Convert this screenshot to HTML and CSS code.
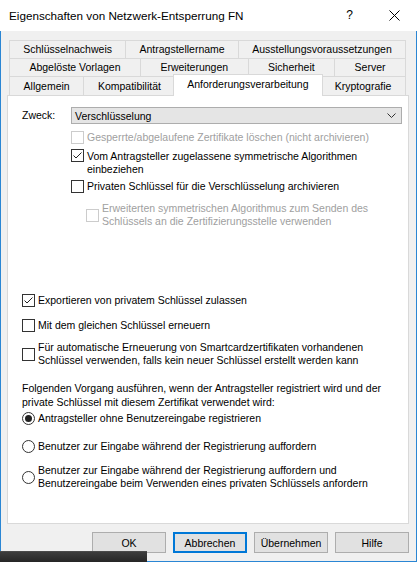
FILE: index.html
```html
<!DOCTYPE html>
<html lang="de">
<head>
    <meta charset="UTF-8">
    <meta name="viewport" content="width=device-width, initial-scale=1.0">
    <title>Eigenschaften von Netzwerk-Entsperrung FN</title>
    <link rel="stylesheet" href="styles.css">
</head>
<body>
    <div class="window">
        <div class="titlebar">
            <span class="title">Eigenschaften von Netzwerk-Entsperrung FN</span>
            <span class="help">?</span>
            <span class="close">
                <svg width="11" height="11" viewBox="0 0 11 11"><path d="M0.5 0.5 L10.5 10.5 M10.5 0.5 L0.5 10.5" stroke="#000" stroke-width="1" fill="none"/></svg>
            </span>
        </div>

        <div class="frame">
            <div class="tabs">
                <div class="tab-row">
                    <div class="tab">Schlüsselnachweis</div>
                    <div class="tab">Antragstellername</div>
                    <div class="tab">Ausstellungsvoraussetzungen</div>
                </div>
                <div class="tab-row">
                    <div class="tab">Abgelöste Vorlagen</div>
                    <div class="tab">Erweiterungen</div>
                    <div class="tab">Sicherheit</div>
                    <div class="tab">Server</div>
                </div>
                <div class="tab-row last">
                    <div class="tab">Allgemein</div>
                    <div class="tab">Kompatibilität</div>
                    <div class="tab active">Anforderungsverarbeitung</div>
                    <div class="tab">Kryptografie</div>
                </div>
            </div>

            <div class="panel">
                <div class="purpose">
                    <span class="purpose-label">Zweck:</span>
                    <div class="select">
                        <span>Verschlüsselung</span>
                        <svg class="chevron" width="9" height="5" viewBox="0 0 9 5"><path d="M0.5 0.5 L4.5 4.5 L8.5 0.5" stroke="#333" stroke-width="1" fill="none"/></svg>
                    </div>
                </div>

                <div class="group">
                    <div class="check disabled space-7">
                        <span class="box"></span>
                        <span class="text">Gesperrte/abgelaufene Zertifikate löschen (nicht archivieren)</span>
                    </div>
                    <div class="check top space-6">
                        <span class="box"><svg width="11" height="11" viewBox="0 0 11 11"><path d="M1.5 5.5 L4 8 L9.5 2.5" stroke="#222" stroke-width="1" fill="none"/></svg></span>
                        <span class="text">Vom Antragsteller zugelassene symmetrische Algorithmen<br>einbeziehen</span>
                    </div>
                    <div class="check space-4">
                        <span class="box"></span>
                        <span class="text">Privaten Schlüssel für die Verschlüsselung archivieren</span>
                    </div>
                    <div class="check disabled indent space-9">
                        <span class="box"></span>
                        <span class="text">Erweiterten symmetrischen Algorithmus zum Senden des<br>Schlüssels an die Zertifizierungsstelle verwenden</span>
                    </div>
                </div>

                <div class="check space-66">
                    <span class="box"><svg width="11" height="11" viewBox="0 0 11 11"><path d="M1.5 5.5 L4 8 L9.5 2.5" stroke="#222" stroke-width="1" fill="none"/></svg></span>
                    <span class="text">Exportieren von privatem Schlüssel zulassen</span>
                </div>
                <div class="check space-12">
                    <span class="box"></span>
                    <span class="text">Mit dem gleichen Schlüssel erneuern</span>
                </div>
                <div class="check space-9">
                    <span class="box"></span>
                    <span class="text">Für automatische Erneuerung von Smartcardzertifikaten vorhandenen<br>Schlüssel verwenden, falls kein neuer Schlüssel erstellt werden kann</span>
                </div>

                <p class="note">Folgenden Vorgang ausführen, wenn der Antragsteller registriert wird und der<br>private Schlüssel mit diesem Zertifikat verwendet wird:</p>

                <div class="radio selected space-3">
                    <span class="circle"></span>
                    <span class="text">Antragsteller ohne Benutzereingabe registrieren</span>
                </div>
                <div class="radio space-15">
                    <span class="circle"></span>
                    <span class="text">Benutzer zur Eingabe während der Registrierung auffordern</span>
                </div>
                <div class="radio space-11">
                    <span class="circle"></span>
                    <span class="text">Benutzer zur Eingabe während der Registrierung auffordern und<br>Benutzereingabe beim Verwenden eines privaten Schlüssels anfordern</span>
                </div>
            </div>

            <div class="buttons">
                <button class="btn">OK</button>
                <button class="btn default">Abbrechen</button>
                <button class="btn">Übernehmen</button>
                <button class="btn">Hilfe</button>
            </div>
        </div>

        <div class="taskbar"></div>
    </div>
</body>
</html>
```

FILE: styles.css
```css
* {
    margin: 0;
    padding: 0;
    box-sizing: border-box;
}

body {
    font-family: "Liberation Sans", Arial, sans-serif;
    font-size: 10.5px;
    color: #000;
    background: #fff;
}

.window {
    position: relative;
    width: 417px;
    height: 562px;
    overflow: hidden;
}

/* title bar */
.titlebar {
    height: 31px;
    display: flex;
    align-items: center;
    background: #fff;
    padding-left: 9px;
}

.title {
    font-size: 11.7px;
    padding-bottom: 1px;
}

.help {
    margin-left: auto;
    font-size: 12px;
    padding-bottom: 1px;
}

.close {
    display: flex;
    margin-left: 36px;
    margin-right: 17px;
}

/* dialog body */
.frame {
    height: 531px;
    background: #f0f0f0;
    border: 1px solid #2a86d4;
    border-top: none;
    padding: 9px 7px 0 6px;
}

.tabs {
    margin: 0 3px 0 2px;
}

.tab-row {
    display: flex;
    height: 18px;
}

.tab-row.last {
    height: 19px;
}

.tab {
    flex: 1 1 auto;
    text-align: center;
    white-space: nowrap;
    line-height: 17px;
    border: 1px solid #d9d9d9;
    border-bottom: none;
    background: #f0f0f0;
    padding: 0 8px;
}

.tab + .tab {
    margin-left: -1px;
}

.tab-row.last .tab {
    line-height: 18px;
}

.tab.active {
    position: relative;
    z-index: 2;
    background: #fff;
    height: 22px;
    margin: -2px -2px -1px -3px;
    line-height: 17px;
}

/* tab page */
.panel {
    height: 429px;
    background: #fff;
    border: 1px solid #d9d9d9;
    padding: 11px 6px 0 14px;
}

.purpose {
    display: flex;
    align-items: center;
    height: 17px;
}

.purpose-label {
    width: 49px;
    padding-bottom: 2px;
}

.select {
    flex: 1;
    height: 17px;
    display: flex;
    align-items: center;
    justify-content: space-between;
    background: #e5e5e5;
    border: 1px solid #adadad;
    padding: 0 5px 0 3px;
}

.chevron {
    margin-bottom: 1px;
}

.group {
    margin-left: 49px;
}

.check,
.radio {
    display: flex;
    align-items: center;
    line-height: 13px;
    white-space: nowrap;
}

.check.top {
    align-items: flex-start;
}

.check.top .box {
    margin-top: -1px;
}

.check.indent {
    margin-left: 15px;
}

.box {
    flex: none;
    width: 13px;
    height: 13px;
    border: 1px solid #333;
    background: #fff;
    margin-right: 3px;
    display: flex;
}

.check.disabled .box {
    border-color: #cccccc;
}

.check.disabled .text {
    color: #a0a0a0;
}

.circle {
    flex: none;
    width: 13px;
    height: 13px;
    border: 1px solid #333;
    border-radius: 50%;
    background: #fff;
    margin-right: 3px;
    display: flex;
    align-items: center;
    justify-content: center;
}

.radio.selected .circle::after {
    content: "";
    width: 7px;
    height: 7px;
    border-radius: 50%;
    background: #222;
}

.note {
    margin-top: 14px;
    line-height: 14px;
    white-space: nowrap;
}

.space-3 { margin-top: 3px; }
.space-4 { margin-top: 4px; }
.space-6 { margin-top: 6px; }
.space-7 { margin-top: 7px; }
.space-9 { margin-top: 9px; }
.space-11 { margin-top: 11px; }
.space-12 { margin-top: 12px; }
.space-15 { margin-top: 15px; }
.space-66 { margin-top: 66px; }

/* buttons */
.buttons {
    display: flex;
    justify-content: flex-end;
    gap: 7px;
    margin-top: 8px;
}

.btn {
    width: 74px;
    height: 21px;
    font-family: inherit;
    font-size: 10.5px;
    color: #000;
    background: #e1e1e1;
    border: 1px solid #adadad;
}

.btn.default {
    border: 2px solid #0078d7;
}

.taskbar {
    position: absolute;
    left: 0;
    bottom: 0;
    width: 147px;
    height: 11px;
    background: linear-gradient(#3d3d3d, #262626);
    border-top: 1px solid #4a4a4a;
}
```
